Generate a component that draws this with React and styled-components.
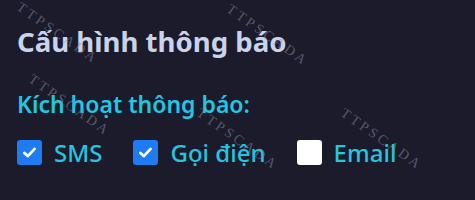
import React from "react";
import styled, { createGlobalStyle } from "styled-components";

const GlobalStyle = createGlobalStyle`
  html, body {
    margin: 0;
    padding: 0;
    background: #1b1b2b;
  }
  body {
    font-family: "Noto Sans", "Open Sans", sans-serif;
  }
`;

const channels = [
  { id: "sms", label: "SMS", checked: true },
  { id: "call", label: "Gọi điện", checked: true },
  { id: "email", label: "Email", checked: false },
];

// watermark stamps over the panel
const marks = [
  { x: 22, y: 0 },
  { x: 232, y: 2 },
  { x: 34, y: 72 },
  { x: 202, y: 106 },
  { x: 346, y: 106 },
];

const App = () => {
  return (
    <>
      <GlobalStyle />
      <Wrapper>
        <Title>Cấu hình thông báo</Title>
        <Label>Kích hoạt thông báo:</Label>
        <Options>
          {channels.map((c) => (
            <Option key={c.id}>
              <Box checked={c.checked}>
                {c.checked && (
                  <svg width="17" height="17" viewBox="0 0 16 16">
                    <path
                      d="M3.2 8.4 L6.4 11.4 L12.8 4.6"
                      fill="none"
                      stroke="#fff"
                      strokeWidth="2.6"
                      strokeLinecap="round"
                      strokeLinejoin="round"
                    />
                  </svg>
                )}
              </Box>
              <OptionText>{c.label}</OptionText>
            </Option>
          ))}
        </Options>
        <Watermarks>
          {marks.map((m, i) => (
            <Mark key={i} style={{ left: m.x, top: m.y }}>
              TTPSCADA
            </Mark>
          ))}
        </Watermarks>
      </Wrapper>
    </>
  );
};

const Wrapper = styled.section`
  position: relative;
  height: 200px;
  box-sizing: border-box;
  padding: 23px 17px 0;
  background: #1b1b2b;
  overflow: hidden;
`;

const Title = styled.h2`
  margin: 0;
  font-size: 27.6px;
  font-weight: 700;
  line-height: 36px;
  color: #c9d4ea;
`;

const Label = styled.div`
  margin-top: 30px;
  font-size: 23px;
  font-weight: 600;
  line-height: 30px;
  color: #22c6e0;
`;

const Options = styled.div`
  display: flex;
  align-items: center;
  gap: 31px;
  margin-top: 21px;
`;

const Option = styled.label`
  display: flex;
  align-items: center;
  gap: 12px;
`;

const Box = styled.span`
  display: flex;
  align-items: center;
  justify-content: center;
  width: 25px;
  height: 25px;
  border-radius: 3px;
  box-sizing: border-box;
  background: ${({ checked }) => (checked ? "#1e7cf2" : "#ffffff")};
`;

const OptionText = styled.span`
  font-size: 24px;
  font-weight: 500;
  line-height: 25px;
  color: #22c6e0;
`;

const Watermarks = styled.div`
  position: absolute;
  inset: 0;
  pointer-events: none;
`;

const Mark = styled.span`
  position: absolute;
  display: block;
  font-family: "Liberation Serif", serif;
  font-size: 14px;
  line-height: 14px;
  letter-spacing: 3px;
  color: rgba(140, 140, 160, 0.55);
  transform: rotate(35deg);
  transform-origin: 0 0;
  white-space: nowrap;
`;

export default App;
